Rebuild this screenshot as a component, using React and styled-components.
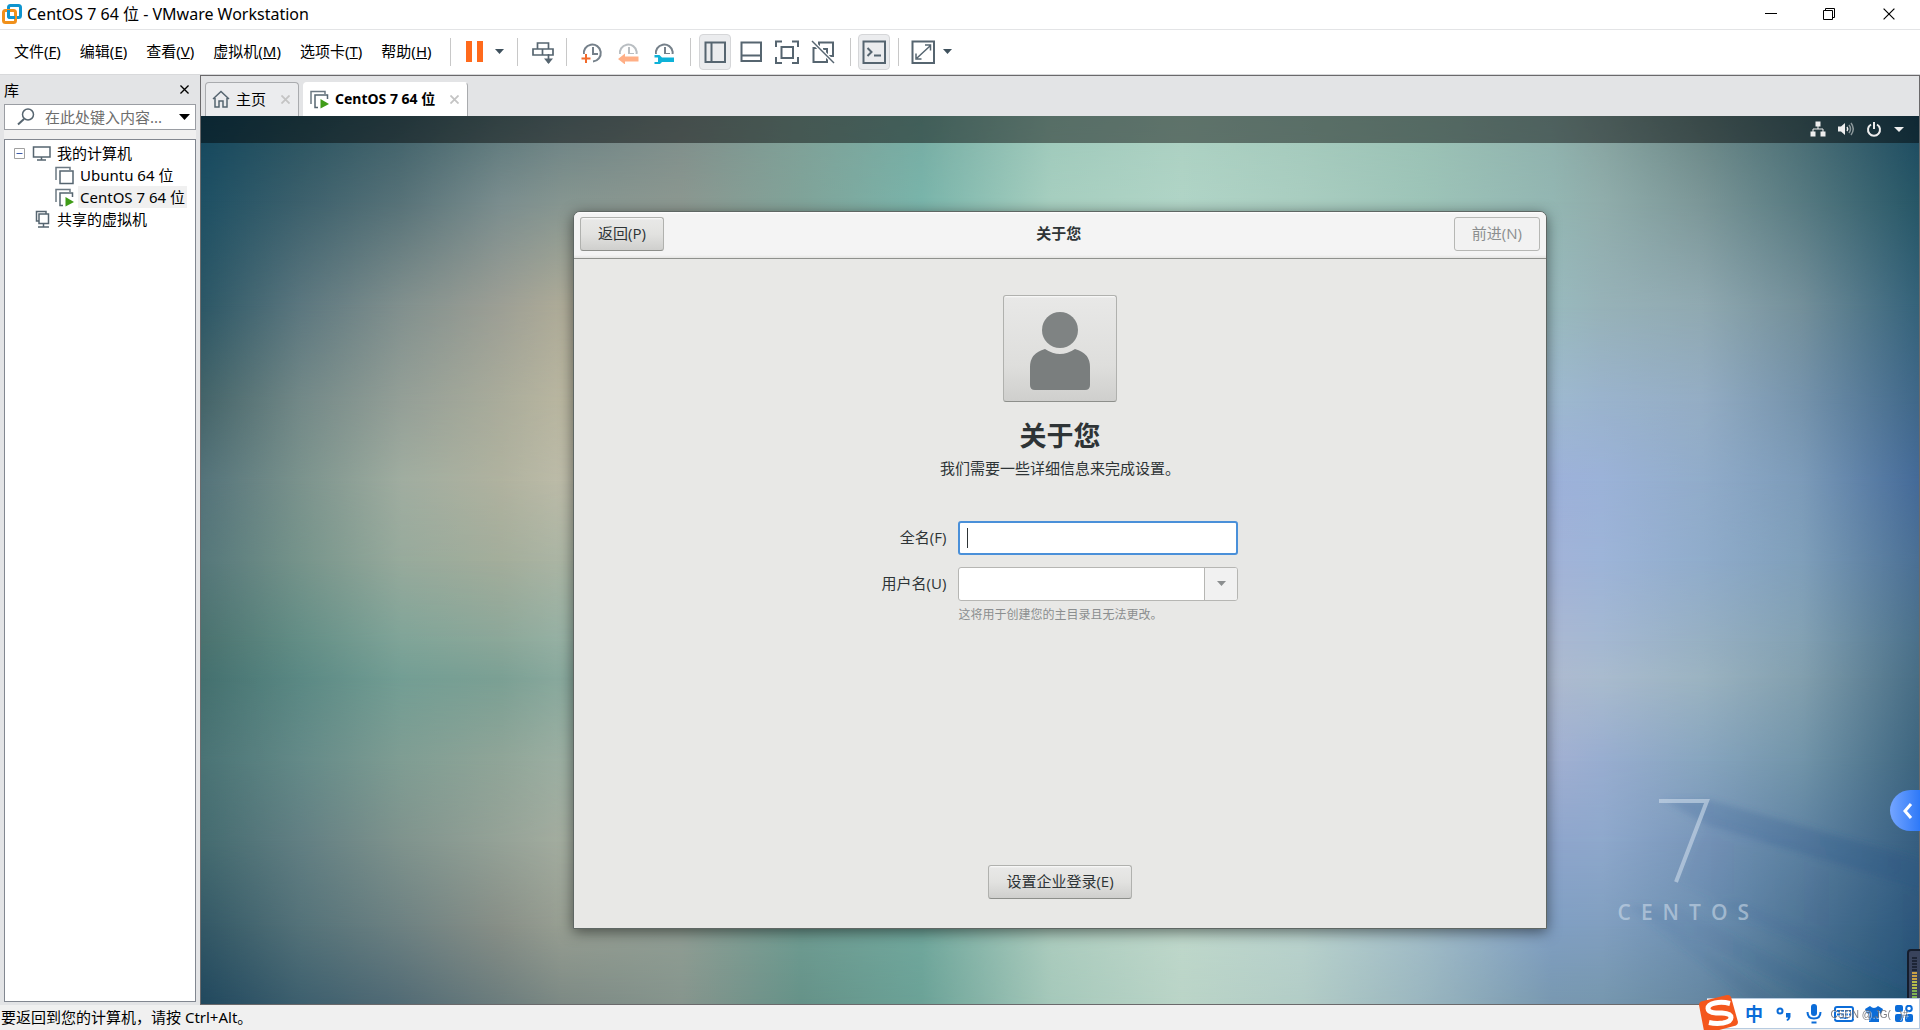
import React from 'react';
import styled, { createGlobalStyle, css } from 'styled-components';

const GlobalStyle = createGlobalStyle`
  * {
    box-sizing: border-box;
  }
  body {
    margin: 0;
    background: #f0f0f0;
    color: #000;
    font-family: 'Noto Sans', 'Noto Sans CJK SC', sans-serif;
    font-size: 15px;
    line-height: 22px;
  }
  button, input {
    font: inherit;
    color: inherit;
  }
`;

const Page = styled.div`
  display: flex;
  flex-direction: column;
  min-height: 100vh;
`;

const IconButton = styled.button`
  display: flex;
  align-items: center;
  justify-content: center;
  padding: 0;
  border: 0;
  background: none;
  width: ${({ $w }) => $w || 36}px;
  height: ${({ $h }) => $h || 36}px;
`;

/* window title and menu */

const TitleBar = styled.header`
  display: flex;
  align-items: center;
  height: 30px;
  padding: 0 0 2px 2px;
  background: #fff;
  border-bottom: 1px solid #e3e4e6;
`;

const Title = styled.h1`
  flex: 1;
  margin: 0 0 0 5px;
  font-size: 16px;
  font-weight: 400;
  line-height: 22px;
`;

const MenuBar = styled.nav`
  display: flex;
  align-items: center;
  height: 45px;
  padding: 0 0 1px 5px;
  background: #fff;
  border-bottom: 1px solid #d8d9db;
`;

const MenuItem = styled.button`
  padding: 0 10px 2px 9px;
  border: 0;
  background: none;
  line-height: 22px;
  white-space: nowrap;
`;

const Separator = styled.span`
  width: 1px;
  height: 28px;
  background: #c8c8c8;
  margin: 0 ${({ $gap }) => $gap || 9}px;
`;

const ToolButton = styled(IconButton)`
  height: 36px;
  border-radius: 4px;
  ${({ $active }) =>
    $active &&
    css`
      background: #ebecee;
      border: 1px solid #d5d6d8;
    `}
`;

/* library */

const Workspace = styled.div`
  display: flex;
  flex: 1;
  background: #e3e4e6;
`;

const Library = styled.aside`
  display: flex;
  flex-direction: column;
  width: 200px;
  padding: 0 4px 3px;
`;

const LibraryHead = styled.div`
  display: flex;
  align-items: center;
  justify-content: space-between;
  height: 29px;
`;

const Search = styled.label`
  display: flex;
  align-items: center;
  height: 26px;
  padding-left: 12px;
  background: #fff;
  border: 1px solid #9a9da3;
`;

const SearchInput = styled.input`
  flex: 1;
  min-width: 0;
  margin-left: 10px;
  padding: 0;
  border: 0;
  outline: 0;
  &::placeholder {
    color: #6d6d6d;
    opacity: 1;
  }
`;

const Tree = styled.ul`
  flex: 1;
  margin: 9px 0 0;
  padding: 2px 0;
  list-style: none;
  background: #fff;
  border: 1px solid #828790;
  box-shadow: 0 -9px 0 #f0f0f0;
`;

const TreeItem = styled.li`
  display: flex;
  align-items: center;
  gap: 4px;
  height: 22px;
  padding-left: ${({ $indent }) => $indent}px;
`;

const TreeLabel = styled.span`
  padding: 0 2px;
  white-space: nowrap;
  background: ${({ $selected }) => ($selected ? '#f0f0f0' : 'none')};
`;

/* tabs */

const Main = styled.main`
  display: flex;
  flex-direction: column;
  flex: 1;
  border: 1px solid #6a696b;
`;

const Tabs = styled.div`
  display: flex;
  align-items: flex-end;
  gap: 4px;
  height: 40px;
  padding-left: 4px;
`;

const Tab = styled.div`
  display: flex;
  align-items: center;
  gap: 6px;
  height: 34px;
  padding: 0 5px 1px 6px;
  border: 1px solid #a9abae;
  border-bottom: 0;
  border-radius: 4px 4px 0 0;
  background: #ebecee;
  ${({ $active }) =>
    $active &&
    css`
      background: #fff;
      border-left-color: #fff;
      border-top-color: #fff;
      font-size: 14px;
      font-weight: 700;
    `}
`;

const TabName = styled.span`
  margin-right: 5px;
  white-space: nowrap;
`;

/* guest desktop */

const Desktop = styled.section`
  position: relative;
  display: flex;
  flex-direction: column;
  flex: 1;
  overflow: hidden;
  font-family: 'Open Sans', 'Noto Sans CJK SC', sans-serif;
  color: #2e3436;
`;

const Paper = styled.svg`
  position: absolute;
  inset: 0;
  width: 100%;
  height: 100%;
`;

const TopPanel = styled.div`
  position: relative;
  display: flex;
  align-items: center;
  justify-content: flex-end;
  height: 27px;
  padding: 0 15px 1px 0;
  gap: 12px;
  background: rgba(0, 0, 0, 0.45);
`;

const Stage = styled.div`
  position: relative;
  display: flex;
  flex: 1;
  align-items: center;
  justify-content: center;
  padding-bottom: 8px;
`;

const Brand = styled.div`
  position: absolute;
  right: 160px;
  bottom: 78px;
  display: flex;
  flex-direction: column;
  align-items: center;
  gap: 15px;
  color: rgba(214, 226, 238, 0.55);
  svg {
    margin-right: 6px;
  }
`;

const BrandName = styled.div`
  font-size: 21px;
  font-weight: 600;
  line-height: 28px;
  letter-spacing: 10px;
`;

const Dialog = styled.form`
  display: flex;
  flex-direction: column;
  width: 974px;
  height: 718px;
  background: #e8e8e6;
  border: 1px solid #5f6764;
  border-radius: 7px 7px 0 0;
  box-shadow: 0 3px 14px rgba(0, 0, 0, 0.5);
`;

const DialogHead = styled.div`
  display: flex;
  align-items: center;
  justify-content: space-between;
  height: 47px;
  padding: 0 6px 1px;
  background: linear-gradient(#fff, #f4f4f4 2px, #f4f4f4 43px, #e4e4e2);
  border-bottom: 1px solid #8f918d;
  border-radius: 6px 6px 0 0;
`;

const GtkButton = styled.button`
  height: 34px;
  padding: 0 17px 2px;
  border: 1px solid #b0b1ae;
  border-bottom-color: #8d8f8b;
  border-radius: 3px;
  background: linear-gradient(#fbfbfb, #e8e8e7 2px, #e2e2e0 16px, #cfcfcd);
  color: #2e3436;
  line-height: 22px;
  &:disabled {
    background: #f2f2f2;
    border-color: #b6b7b4;
    color: #8b8e8f;
  }
`;

const DialogTitle = styled.strong`
  padding-bottom: 2px;
  font-weight: 700;
`;

const DialogBody = styled.div`
  display: flex;
  flex-direction: column;
  align-items: center;
  flex: 1;
  padding: 36px 0 29px;
`;

const Avatar = styled(GtkButton)`
  display: flex;
  align-items: center;
  justify-content: center;
  width: 114px;
  height: 107px;
  padding: 0;
  background: linear-gradient(#fbfbfb, #e8e8e7 2px, #dededc 70px, #cfcfcd);
`;

const Heading = styled.h2`
  margin: 16px 0 3px;
  font-size: 27px;
  line-height: 36px;
  font-weight: 700;
`;

const Intro = styled.p`
  margin: 0 0 42px;
  line-height: 22px;
`;

const Fields = styled.div`
  display: grid;
  grid-template-columns: auto 280px;
  align-items: center;
  gap: 12px;
`;

const FieldLabel = styled.label`
  padding-bottom: 2px;
  text-align: right;
`;

const Entry = styled.div`
  display: flex;
  align-items: center;
  height: 34px;
  padding-left: ${({ $focused }) => ($focused ? 7 : 8)}px;
  overflow: hidden;
  background: #fff;
  border: ${({ $focused }) => ($focused ? '2px solid #4a90d9' : '1px solid #b6b6b3')};
  border-radius: 3px;
`;

const Caret = styled.span`
  width: 1px;
  height: 20px;
  background: #2e3436;
`;

const EntryInput = styled.input`
  flex: 1;
  min-width: 0;
  height: 28px;
  padding: 0;
  border: 0;
  outline: 0;
  background: none;
`;

const EntryDrop = styled(IconButton)`
  background: #f1f1f1;
  border-left: 1px solid #b6b6b3;
`;

const Hint = styled.p`
  grid-column: 2;
  margin: -6px 0 0;
  color: #8b8e8f;
  font-size: 12px;
  line-height: 16px;
`;

const Enterprise = styled.div`
  margin-top: auto;
`;

/* overlays and status */

const StatusBar = styled.footer`
  height: 25px;
  padding: 1px 0 0 1px;
  background: #f0f0f0;
`;

const SideHandle = styled(IconButton)`
  position: fixed;
  right: 0;
  bottom: 199px;
  padding-left: 5px;
  border-radius: 21px 0 0 21px;
  background: linear-gradient(90deg, #74a5ff, #2e79f8);
`;

const Meter = styled.svg`
  position: fixed;
  right: 0;
  bottom: 32px;
`;

const Ime = styled.div`
  position: fixed;
  right: 0;
  bottom: 1px;
  display: flex;
  align-items: center;
  height: 31px;
  background: #fff;
  border: 1px solid #b7cbe0;
  border-left: 0;
  color: #0b6cd8;
`;

const SogouMark = styled.svg`
  margin-left: -8px;
  overflow: visible;
`;

const ImeButton = styled(IconButton)`
  font-size: 18px;
  font-weight: 700;
  line-height: 24px;
`;

const Watermark = styled.span`
  position: fixed;
  right: 12px;
  bottom: 6px;
  font-family: 'Liberation Sans', sans-serif;
  font-size: 10px;
  line-height: 18px;
  color: rgba(110, 110, 115, 0.9);
  text-shadow: 1px 1px 0 rgba(255, 255, 255, 0.6);
  white-space: pre;
  pointer-events: none;
`;

const ink = '#566570';

const Icon = ({ w = 24, h = w, box, children }) => (
  <svg
    width={w}
    height={h}
    viewBox={box || `0 0 ${w} ${h}`}
    fill="none"
    stroke={ink}
    strokeWidth="2"
    aria-hidden="true"
  >
    {children}
  </svg>
);

const VmwareLogo = () => (
  <Icon w={20}>
    <rect x="6.5" y="1.5" width="12" height="12" rx="2" stroke="#0f95cf" strokeWidth="3" />
    <rect x="1.5" y="6.5" width="12" height="12" rx="2" stroke="#f0901b" strokeWidth="3" />
    <path d="M6.5 6v6q0 1.500 1.500 1.500h5" stroke="#0f95cf" strokeWidth="3" />
  </Icon>
);

const Down = ({ w = 9, h = 5, color = '#3f515d' }) => (
  <svg width={w} height={h} viewBox="0 0 10 6" preserveAspectRatio="none" aria-hidden="true">
    <path d="M0 0h10L5 6z" fill={color} />
  </svg>
);

const Clock = ({ faded, children }) => (
  <Icon>
    <g stroke={faded ? '#b9bec2' : '#75808a'}>
      <path d="M4 15a8.500 8.500 0 1 1 9 6.500" />
      <path d="M13 7v7h5" />
    </g>
    {children}
  </Icon>
);

const VmIcon = ({ running }) => (
  <Icon w={19}>
    <path d="M1 14V1.500h14V4" stroke="#6c7983" strokeWidth="1.500" />
    {running ? (
      <path d="M8 17.500H5V5h12.500v4" strokeWidth="1.500" />
    ) : (
      <rect x="5" y="5" width="13" height="12.500" strokeWidth="1.500" />
    )}
    {running && <path d="M10.500 9v9.500l8.500-4.500z" fill="#3f9c17" stroke="none" />}
  </Icon>
);

const Cross = ({ size = 9, color = '#000', width = 1.5 }) => (
  <svg width={size} height={size} viewBox="0 0 10 10" aria-hidden="true">
    <path d="M.5.5l9 9M9.500.5l-9 9" stroke={color} strokeWidth={width} />
  </svg>
);

const menus = [
  ['文件', 'F'],
  ['编辑', 'E'],
  ['查看', 'V'],
  ['虚拟机', 'M'],
  ['选项卡', 'T'],
  ['帮助', 'H'],
];

// wallpaper colours: a row is [y, [[x, colour], ...]], blended in both directions
const at = (xs, list) => list.split(' ').map((c, i) => [xs[i], `#${c}`]);
const full = [0, 100, 200, 300, 360, 480, 600, 720, 850, 980, 1100, 1220, 1350, 1400, 1500, 1600, 1717];
const sides = [0, 100, 200, 300, 360, 1350, 1400, 1500, 1600, 1717];
const rows = [
  [0, at(full, '14465c 28525f 3e6069 5a7679 687f82 7c8d8a 7fa198 77aca3 9ec9bb abd0c1 a4cabc 9bc2b5 8fb1ac 86a39f 688584 486c73 1c4a60')],
  [85, at(full, '1e5064 3c606c 577278 7a8d8e 859590 8b9790 80a399 79b4aa a6cebf b0d4c6 a9cdc0 9dc4b8 93b6b2 90adab 7b9697 577a81 265666')],
  [190, at(sides, '2c5766 5c777f 81908e 9d9f95 aeab98 99babe 97b2b8 90a9b1 738f9a 34627a')],
  [285, at(sides, '446469 738988 949f97 aaac9b b9b6a0 9eb9d0 9ab3cd 94adc4 7593ac 3f6789')],
  [365, at(sides, '54737a 7b938d a0ada0 b0b29f bcbba8 9db1da 9bb2d8 91acca 7c9bb9 446a98')],
  [445, at(sides, '55777a 76948b 97aa9c a3ad9b abb5a4 a2b3d8 9db4d8 90accb 7f9fba 4a6f94')],
  [525, at(sides, '4a726f 638e86 7fa498 8ba799 95b0a3 aab8d2 a4b8d2 97b0c3 83a1b3 4a708a')],
  [562, at(sides, '44706f 5b8984 739e94 7ba094 89a99d adbad0 a9bbce 9bb3c1 829fae 476d85')],
  [645, at(sides, '4a7375 648a88 7f9d93 90a598 9cafa2 a1b0d2 98add0 87a5bf 7194a9 3d657f')],
  [725, at(sides, '446b70 627f83 7f938d 95a297 a3ac9f 8ea5cc 8ea8cc 7896b9 5f83a2 365e80')],
  [810, at(full, '335866 547279 6d8182 888f87 979e92 909e94 6f9c92 71a89d acccbe bfd8cb b9d2cd a2bdc8 809fc3 819fc0 6c8fb0 4f7595 2a567a')],
  [888, at(full, '21485e 3d5f6e 526b75 6c7d7d 7c8984 86958d 659288 6ba297 a5c8ba bad4c7 b2ccc6 9ab6bf 7898b0 7697ae 6587a2 426b88 205070')],
];

const Wallpaper = () => (
  <Paper viewBox="0 0 1717 888" preserveAspectRatio="none" aria-hidden="true">
    <defs>
      {rows.map(([y, stops], i) => {
        const from = i ? rows[i - 1][0] : -1;
        return (
          <React.Fragment key={y}>
            <linearGradient id={`row${i}`}>
              {stops.map(([x, color]) => (
                <stop key={x} offset={x / 1717} stopColor={color} />
              ))}
            </linearGradient>
            <linearGradient id={`fade${i}`} gradientUnits="userSpaceOnUse" x1="0" x2="0" y1={from} y2={y}>
              <stop offset="0" stopColor="#fff" stopOpacity="0" />
              <stop offset="1" stopColor="#fff" />
            </linearGradient>
            <mask id={`mask${i}`} maskUnits="userSpaceOnUse" x="0" y="0" width="1717" height="888">
              <rect width="1717" height="888" fill={`url(#fade${i})`} />
            </mask>
          </React.Fragment>
        );
      })}
      <linearGradient id="shade">
        <stop offset="0" stopColor="#4a6fa4" stopOpacity=".25" />
        <stop offset="1" stopColor="#2a5580" stopOpacity=".45" />
      </linearGradient>
      <filter id="soft">
        <feGaussianBlur stdDeviation="3" />
      </filter>
    </defs>
    {rows.map(([y], i) => (
      <rect key={y} width="1717" height="888" fill={`url(#row${i})`} mask={i ? `url(#mask${i})` : undefined} />
    ))}
    <g fill="url(#shade)" filter="url(#soft)">
      <path d="M1462 684h46l220 62v30l-225-68z" />
      <path d="M1506 700l-30 65 270 128V780z" opacity=".25" />
      <path d="M1425 790l50 0 190 100h-40z" opacity=".4" />
      <path d="M1425 790l20 0 140 100h-30z" opacity=".3" />
      <path d="M1505 786l35 0 190 85v14z" opacity=".5" />
    </g>
  </Paper>
);

function App() {
  const [fullName, setFullName] = React.useState('');
  const [userName, setUserName] = React.useState('');

  return (
    <Page>
      <GlobalStyle />
      <TitleBar>
        <VmwareLogo />
        <Title>CentOS 7 64 位 - VMware Workstation</Title>
        <IconButton $w={58} $h={28} aria-label="最小化">
          <Icon w={12}>
            <path d="M0 5.500h12" stroke="#000" strokeWidth="1" />
          </Icon>
        </IconButton>
        <IconButton $w={58} $h={28} aria-label="还原">
          <Icon w={12}>
            <path d="M.5 2.500h9v9h-9zM2.500 2V.5h9v9H10" stroke="#000" strokeWidth="1" />
          </Icon>
        </IconButton>
        <IconButton $w={62} $h={28} aria-label="关闭">
          <Cross size={12} width={1} />
        </IconButton>
      </TitleBar>

      <MenuBar>
        {menus.map(([name, key]) => (
          <MenuItem key={key}>
            {name}(<u>{key}</u>)
          </MenuItem>
        ))}
        <Separator $gap={8} />
        <ToolButton $w={32} aria-label="挂起">
          <Icon w={18} h={21}>
            <path d="M0 0h6v21H0zM11 0h6v21h-6z" fill="#ff6a1c" stroke="none" />
          </Icon>
        </ToolButton>
        <ToolButton $w={17} aria-label="电源选项">
          <Down />
        </ToolButton>
        <Separator />
        <ToolButton $w={32} aria-label="发送按键">
          <Icon>
            <path d="M6.500 9V3h11v6M2 9h20v6H2zM11.500 9v6M17.500 14v9" strokeWidth="1.700" />
            <path d="M13 18.500h9l-4.500 5.500z" fill={ink} stroke="none" />
          </Icon>
        </ToolButton>
        <Separator $gap={7} />
        <ToolButton aria-label="拍摄快照">
          <Clock>
            <path d="M1 14h10v9H1z" fill="#fff" stroke="none" />
            <path d="M6 14v9M1.500 18.500h9" stroke="#f26a2a" />
          </Clock>
        </ToolButton>
        <ToolButton aria-label="恢复快照">
          <Clock faded>
            <path d="M3 14h20v10H3z" fill="#fff" stroke="none" />
            <path d="M9 13.500v3h13.500v5H9v3L2 19z" fill="#ffaf86" stroke="none" />
          </Clock>
        </ToolButton>
        <ToolButton aria-label="管理快照">
          <Clock>
            <path d="M2 14h21v10H2z" fill="#fff" stroke="none" />
            <path
              d="M2.500 15h5l2.500 2.500h12v4.500H10L7.500 24.500h-5v-2.500h3.500v-4.500H2.500z"
              fill="#0eb2d8"
              stroke="none"
            />
          </Clock>
        </ToolButton>
        <Separator $gap={8} />
        <ToolButton $w={32} $active aria-label="显示库">
          <Icon>
            <path d="M2.500 2.500h19.500v19.500H2.500zM8.500 2v20" />
          </Icon>
        </ToolButton>
        <ToolButton $w={40} aria-label="缩略图栏">
          <Icon>
            <path d="M2.500 2.500h19.500v18.500H2.500zM2 15.500h20" />
          </Icon>
        </ToolButton>
        <ToolButton $w={32} aria-label="全屏">
          <Icon>
            <path d="M1 7V1.500h6M17 1.500h6V7M23 17v6h-6M7 23H1v-6M6.500 7h11.500v11H6.500z" />
          </Icon>
        </ToolButton>
        <ToolButton $w={40} aria-label="Unity">
          <Icon>
            <path d="M8 7V2.500h14v13.500h-6M2.500 8h4M2.500 7v15h13.500V9h-4" />
            <path d="M1 1l22 22" stroke="#fff" strokeWidth="4" />
            <path d="M1 1l22 22" strokeWidth="1.500" />
          </Icon>
        </ToolButton>
        <Separator $gap={7} />
        <ToolButton $w={32} $active aria-label="控制台视图">
          <Icon>
            <path d="M1.500 1.500h21.500v21.500H1.500z" />
            <path d="M5.500 8l4 4-4 4M12 15.500h7" />
          </Icon>
        </ToolButton>
        <Separator $gap={8} />
        <ToolButton $w={32} aria-label="自由拉伸">
          <Icon>
            <path d="M1.500 1.500h21.500v21.500H1.500z" />
            <path d="M14 5h5.500v5.500M10.500 19H5v-5.500M6 18L19 6" strokeWidth="1.500" />
          </Icon>
        </ToolButton>
        <ToolButton $w={17} aria-label="拉伸选项">
          <Down />
        </ToolButton>
      </MenuBar>

      <Workspace>
        <Library>
          <LibraryHead>
            <span>库</span>
            <IconButton $w={24} $h={24} aria-label="关闭库">
              <Cross />
            </IconButton>
          </LibraryHead>
          <Search>
            <Icon w={18}>
              <circle cx="11" cy="6.500" r="5.500" strokeWidth="1.500" />
              <path d="M7 11l-6 5.500" />
            </Icon>
            <SearchInput placeholder="在此处键入内容..." aria-label="搜索" />
            <IconButton $w={22} $h={24} aria-label="搜索选项">
              <Down w={11} h={6} color="#000" />
            </IconButton>
          </Search>
          <Tree>
            <TreeItem $indent={9}>
              <Icon w={11}>
                <path d="M.5.5h10v10H.5z" stroke="#a0a0a0" strokeWidth="1" />
                <path d="M2.500 5.500h6" stroke="#3c5aa8" strokeWidth="1" />
              </Icon>
              <Icon w={22} h={16}>
                <path d="M4.500 2h16.500v10H4.500zM12.500 12v3M8 15h9" strokeWidth="1.500" />
              </Icon>
              <TreeLabel>我的计算机</TreeLabel>
            </TreeItem>
            <TreeItem $indent={50}>
              <VmIcon />
              <TreeLabel>Ubuntu 64 位</TreeLabel>
            </TreeItem>
            <TreeItem $indent={50}>
              <VmIcon running />
              <TreeLabel $selected>CentOS 7 64 位</TreeLabel>
            </TreeItem>
            <TreeItem $indent={29}>
              <Icon w={17} h={18}>
                <path d="M5 11H2.500V1.500H12V4M5 4h9.500v9.500H5zM9.500 13.500v3M4 17h11" strokeWidth="1.500" />
              </Icon>
              <TreeLabel>共享的虚拟机</TreeLabel>
            </TreeItem>
          </Tree>
        </Library>

        <Main>
          <Tabs>
            <Tab>
              <Icon w={18}>
                <path d="M1 9l8-7.500L17 9M3 8v9h4v-6h4v6h4V8" strokeWidth="1.500" />
              </Icon>
              <TabName>主页</TabName>
              <IconButton $w={16} $h={16} aria-label="关闭主页">
                <Cross color="#c4c4c4" width={2} />
              </IconButton>
            </Tab>
            <Tab $active>
              <VmIcon running />
              <TabName>CentOS 7 64 位</TabName>
              <IconButton $w={16} $h={16} aria-label="关闭标签">
                <Cross color="#c4c4c4" width={2} />
              </IconButton>
            </Tab>
          </Tabs>

          <Desktop>
            <Wallpaper />
            <TopPanel>
              <Icon w={16}>
                <path d="M5.500.5h5v5h-5zM.5 10.500h5v5h-5zM10.500 10.500h5v5h-5z" fill="#eee" stroke="none" />
                <path d="M8 5v3M3 11V8h10v3" stroke="#eee" strokeWidth="1" />
              </Icon>
              <Icon w={16}>
                <path d="M0 5.500h3L7 2v12l-4-3.500H0z" fill="#eee" stroke="none" />
                <path d="M9 6q1.500 2 0 4" stroke="#eee" strokeWidth="1.500" />
                <path d="M11 4q3 4 0 8M13 2q4.500 6 0 12" stroke="#8b979a" strokeWidth="1.500" />
              </Icon>
              <Icon w={16}>
                <path d="M5 3.500a6 6 0 1 0 6 0M8 1v7" stroke="#eee" />
              </Icon>
              <Down w={10} h={5} color="#eee" />
            </TopPanel>
            <Stage>
              <Brand>
                <svg width="52" height="84" viewBox="0 0 52 84" aria-hidden="true">
                  <path d="M0 2h48L17 83" fill="none" stroke="currentColor" strokeWidth="4" />
                </svg>
                <BrandName>CENTOS</BrandName>
              </Brand>
              <Dialog onSubmit={(e) => e.preventDefault()}>
                <DialogHead>
                  <GtkButton type="button">返回(P)</GtkButton>
                  <DialogTitle>关于您</DialogTitle>
                  <GtkButton disabled>前进(N)</GtkButton>
                </DialogHead>
                <DialogBody>
                  <Avatar type="button" aria-label="头像">
                    <svg width="60" height="84" viewBox="0 -6 60 84" aria-hidden="true">
                      <ellipse cx="30" cy="18" rx="18" ry="18" fill="#7f8383" />
                      <path
                        d="M15 37q15 10 30 0 15 4 15 18v18q0 5-5 5H5q-5 0-5-5V55q0-14 15-18z"
                        fill="#7a7e7e"
                      />
                    </svg>
                  </Avatar>
                  <Heading>关于您</Heading>
                  <Intro>我们需要一些详细信息来完成设置。</Intro>
                  <Fields>
                    <FieldLabel htmlFor="fullname">全名(F)</FieldLabel>
                    <Entry $focused>
                      <Caret />
                      <EntryInput
                        id="fullname"
                        value={fullName}
                        onChange={({ target }) => setFullName(target.value)}
                      />
                    </Entry>
                    <FieldLabel htmlFor="username">用户名(U)</FieldLabel>
                    <Entry>
                      <EntryInput
                        id="username"
                        value={userName}
                        onChange={({ target }) => setUserName(target.value)}
                      />
                      <EntryDrop $w={33} $h={32} type="button" aria-label="用户名建议">
                        <Down color="#8b8e8f" />
                      </EntryDrop>
                    </Entry>
                    <Hint>这将用于创建您的主目录且无法更改。</Hint>
                  </Fields>
                  <Enterprise>
                    <GtkButton type="button">设置企业登录(E)</GtkButton>
                  </Enterprise>
                </DialogBody>
              </Dialog>
            </Stage>
          </Desktop>
        </Main>
      </Workspace>

      <StatusBar>要返回到您的计算机，请按 Ctrl+Alt。</StatusBar>

      <SideHandle $w={30} $h={41} aria-label="展开">
        <Icon w={10} h={16}>
          <path d="M8 1L2 8l6 7" stroke="#fff" strokeWidth="3" />
        </Icon>
      </SideHandle>
      <Meter width="13" height="49" aria-hidden="true">
        <rect x="1" y="1" width="20" height="60" rx="3" fill="#39435c" stroke="#151d2c" strokeWidth="2" />
        {[...Array(14)].map((_, i) => (
          <rect
            key={i}
            x="5"
            y={8 + i * 3}
            width="5"
            height="2"
            fill={i < 5 ? '#1d2536' : i < 8 ? '#c9a046' : i < 11 ? '#b5bd4a' : '#7fb353'}
          />
        ))}
      </Meter>
      <Ime>
        <SogouMark width="40" height="40" viewBox="0 0 40 40" aria-hidden="true">
          <path
            d="M2 7.500L28 1q3-.5 4 2l7 25q0 3-2 3.500L9 39q-3 .5-4-2L0 11q0-3 2-3.500z"
            fill="#f4571d"
          />
          <path
            d="M31 9.500q-8-2-15-.5-7 1.500-7 5.500t8 4.500h6q9 .5 9 4.500t-8 5.500q-7 1-14-.5"
            fill="none"
            stroke="#fff"
            strokeWidth="5"
          />
        </SogouMark>
        <ImeButton $w={30} $h={29}>中</ImeButton>
        <ImeButton $w={30} $h={29} aria-label="标点">
          <Icon w={16}>
            <circle cx="4" cy="5" r="2.500" stroke="#0b6cd8" />
            <path d="M10 7h4.500v4q-.5 3-3.500 4l-.5-1.500q1.500-.5 1.500-2H10z" fill="#0b6cd8" stroke="none" />
          </Icon>
        </ImeButton>
        <ImeButton $w={30} $h={29} aria-label="语音">
          <Icon w={16} h={20}>
            <rect x="5" y="0" width="6" height="12" rx="3" fill="#0b6cd8" stroke="none" />
            <path d="M1.500 8q0 6.500 6.500 6.500T14.500 8M5.500 18.500h5" stroke="#0b6cd8" />
          </Icon>
        </ImeButton>
        <ImeButton $w={30} $h={29} aria-label="键盘">
          <Icon w={20} h={16}>
            <rect x="1" y="1" width="18" height="14" rx="2" stroke="#0b6cd8" />
            <path d="M3 5h14M3 8.500h14" stroke="#0b6cd8" strokeDasharray="3 1" />
            <path d="M6 12h8" stroke="#0b6cd8" />
          </Icon>
        </ImeButton>
        <ImeButton $w={30} $h={29} aria-label="皮肤">
          <Icon w={18} h={16}>
            <path d="M5 0q4 4 8 0l5 3-2 5-2-1v9H4V7L2 8 0 3z" fill="#0b6cd8" stroke="none" />
          </Icon>
        </ImeButton>
        <ImeButton $w={30} $h={29} aria-label="工具箱">
          <Icon w={18} h={17}>
            <rect width="8" height="7" rx="2" fill="#0b6cd8" stroke="none" />
            <rect y="9" width="8" height="8" rx="2" fill="#0b6cd8" stroke="none" />
            <rect x="10" y="9" width="8" height="8" rx="2" fill="#0b6cd8" stroke="none" />
            <circle cx="14" cy="3.500" r="2.800" stroke="#0b6cd8" />
          </Icon>
        </ImeButton>
      </Ime>
      <Watermark>CSDN @.JG(   )#</Watermark>
    </Page>
  );
}

export default App;
